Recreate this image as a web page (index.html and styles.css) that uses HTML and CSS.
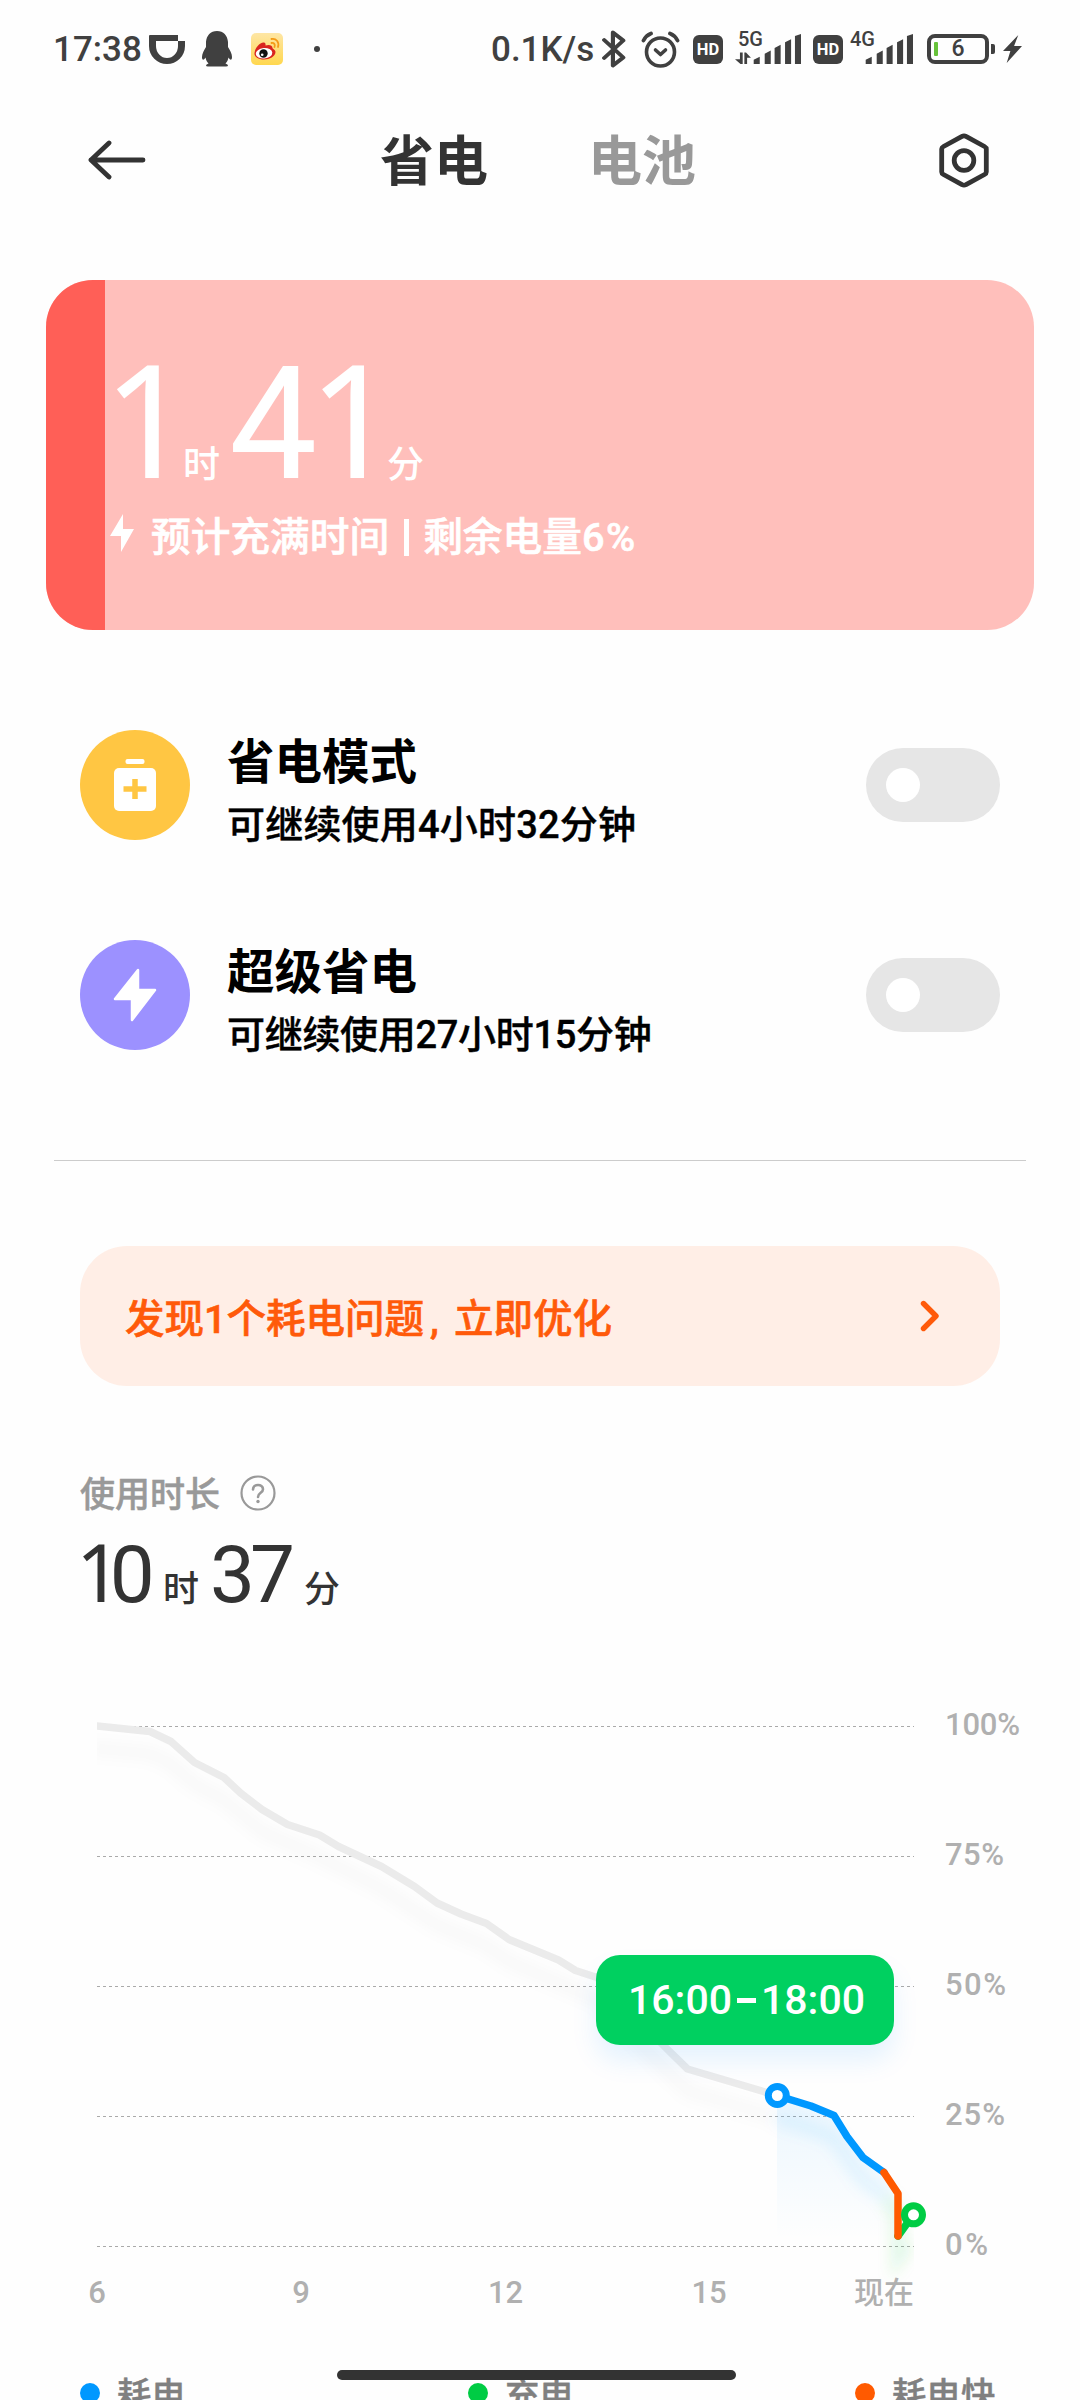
FILE: index.html
```html
<!DOCTYPE html>
<html lang="zh-CN">
<head>
<meta charset="utf-8">
<title>省电</title>
<link rel="stylesheet" href="styles.css">
</head>
<body>
<main class="screen">
  <header class="status">
    <span class="clock">17:38</span>
    <svg class="ic-didi" width="36" height="29" viewBox="0 0 36 29"><path fill="#404040" d="M1 0H29V6H36V11A18 18 0 0 1 0 11V1Q0 0 1 0ZM7 6V11A11 12 0 0 0 29 11V6Z"/></svg>
    <svg class="ic-qq" width="30" height="36" viewBox="0 0 30 36"><path fill="#404040" d="M15 0C21.500 0 25.500 4.500 26 11V16C28 19 30 23 30 26C30 29 28.500 30 26.500 26.500C26 29 25 31 23.500 32.500Q26 33.500 26 34.500Q26 35.500 24 35.500H6Q4 35.500 4 34.500Q4 33.500 6.500 32.500C5 31 4 29 3.500 26.500C1.500 30 0 29 0 26C0 23 2 19 4 16V11C4.500 4.500 8.500 0 15 0Z"/></svg>
    <svg class="ic-weibo" width="32" height="32" viewBox="0 0 32 32"><defs><linearGradient id="wb" x2="0" y2="1"><stop stop-color="#fee6a5"/><stop offset="1" stop-color="#ffd74e"/></linearGradient></defs><rect width="32" height="32" rx="5" fill="url(#wb)"/><path fill="#d9241f" d="M3.500 20C4 15 9 9 13 9.500C15 10 14.500 12 14.500 12.500C17 11.500 21.500 11.500 21.500 15C21.500 16 24.500 16.500 24.500 19C24.500 23.500 18.500 26.500 13 26.500C7.500 26.500 3 24 3.500 20Z"/><ellipse cx="13" cy="20.300" rx="8.300" ry="5.200" fill="#fff" transform="rotate(-5 13 20)"/><circle cx="12.500" cy="20.500" r="4.200" fill="#111"/><circle cx="11.200" cy="21.800" r="1.300" fill="#fff"/><path fill="none" stroke="#f49b17" stroke-width="1.800" stroke-linecap="round" d="M20.500 6C25 5 28.500 9 27 14M20.500 10C23 9.500 24.500 11.500 23.500 14"/></svg>
    <span class="dot"></span>
    <span class="speed">0.1K/s</span>
    <svg class="ic-bt" width="24" height="38" viewBox="0 0 22 38" preserveAspectRatio="none"><path fill="none" stroke="#404040" stroke-width="3.800" stroke-linejoin="round" stroke-linecap="round" d="M2 10L19.500 27.500L10 35.500V2.500L19.500 10.500L2 28"/></svg>
    <svg class="ic-alarm" width="39" height="37" viewBox="0 0 39 37"><g fill="none" stroke="#404040"><circle cx="19.500" cy="21" r="14" stroke-width="3.600"/><path stroke-width="3.800" stroke-linecap="round" d="M2.500 9.500Q5 4.500 10 2.500M36.500 9.500Q34 4.500 29 2.500"/><path stroke-width="3.600" stroke-linecap="round" stroke-linejoin="round" d="M14.500 19L19.500 23.500L24.500 19"/></g></svg>
    <span class="hd hd-one">HD</span>
    <div class="signal signal-one">
      <span class="net">5G</span>
      <svg width="66" height="30" viewBox="0 0 60 29" preserveAspectRatio="none"><g fill="#404040"><path d="M4.500 18H7V29H5L0 24.500H4.500ZM8.500 18H10L14.500 23H11V29H8.500Z"/><path d="M17 25L22.500 22V29H17ZM27 19L32.500 16V29H27ZM36 13.500L41.500 10.500V29H36ZM45.500 8L51 5V29H45.500ZM54.500 2L60 0V29H54.500Z"/></g></svg>
    </div>
    <span class="hd hd-two">HD</span>
    <div class="signal signal-two">
      <span class="net">4G</span>
      <svg width="66" height="30" viewBox="0 0 60 29" preserveAspectRatio="none"><path fill="#404040" d="M17 25L22.500 22V29H17ZM27 19L32.500 16V29H27ZM36 13.500L41.500 10.500V29H36ZM45.500 8L51 5V29H45.500ZM54.500 2L60 0V29H54.500Z"/></svg>
    </div>
    <div class="batt"><span class="batt-level"></span><span class="batt-num">6</span></div>
    <span class="batt-nub"></span>
    <svg class="ic-charge" width="19" height="28" viewBox="0 0 18 28" preserveAspectRatio="none"><path fill="#404040" d="M14.500 0L0 16H7L3.500 28L18 11H10.500Z"/></svg>
  </header>

  <nav class="topbar">
    <svg width="58" height="40" viewBox="0 0 58 40"><path fill="none" stroke="#333" stroke-width="4.800" stroke-linecap="round" stroke-linejoin="round" d="M21 3L3 20L21 37M3 20H55"/></svg>
    <div class="tabs"><span class="tab tab-on">省电</span><span class="tab">电池</span></div>
    <svg width="50" height="55" viewBox="0 0 50 55"><g fill="none" stroke="#333" stroke-width="4.800" stroke-linejoin="round"><path d="M25 2.800Q26 2.800 27 3.400L45.500 13.500Q47.300 14.500 47.300 16V39Q47.300 40.500 45.500 41.500L27 51.600Q25 52.600 23 51.600L4.500 41.500Q2.700 40.500 2.700 39V16Q2.700 14.500 4.500 13.500L23 3.400Q24 2.800 25 2.800Z"/><circle cx="25" cy="27.500" r="9.800"/></g></svg>
  </nav>

  <section class="hero">
    <div class="hero-fill"></div>
    <div class="hero-body">
      <div class="hero-time"><b class="h1 one">1</b><i class="hu">时</i><b class="h2">4<em class="one">1</em></b><i>分</i></div>
      <div class="hero-note">
        <svg width="24" height="38" viewBox="0 0 24 38"><path fill="#fff" d="M13 0L0 22H11V38L24 15H13Z"/></svg>
        <span>预计充满时间<s></s>剩余电量<em>6%</em></span>
      </div>
    </div>
  </section>

  <section class="modes">
    <div class="mode">
      <span class="badge badge-save"><svg width="42" height="52" viewBox="0 0 42 52"><rect x="11.500" y="0" width="19" height="5" rx="2" fill="#fff"/><rect y="9" width="42" height="43" rx="5" fill="#fff"/><path fill="none" stroke="#ffc643" stroke-width="5.500" stroke-linecap="butt" d="M21 20V40M9.500 30H32.500"/></svg></span>
      <div class="mode-text"><h2>省电模式</h2><p class="p-one">可继续使用4小时32分钟</p></div>
      <span class="toggle"></span>
    </div>
    <div class="mode">
      <span class="badge badge-super"><svg width="44" height="54" viewBox="0 0 44 54"><path fill="#fff" stroke="#fff" stroke-width="2.500" stroke-linejoin="round" d="M25 2V22H42L19 52V31H2Z"/></svg></span>
      <div class="mode-text"><h2>超级省电</h2><p class="p-two">可继续使用27小时15分钟</p></div>
      <span class="toggle"></span>
    </div>
  </section>

  <hr class="rule">

  <section class="notice">
    <span>发现1个耗电问题<i>,</i>立即优化</span>
    <svg width="20" height="32" viewBox="0 0 20 32"><path fill="none" stroke="#ff5a0a" stroke-width="5.400" stroke-linecap="round" stroke-linejoin="round" d="M3.500 3.500L16 16L3.500 28.500"/></svg>
  </section>

  <section class="usage">
    <div class="usage-label"><span>使用时长</span><svg width="36" height="36" viewBox="0 0 36 36"><circle cx="18" cy="18" r="16.500" fill="none" stroke="#999" stroke-width="2.200"/><path fill="none" stroke="#999" stroke-width="2.600" stroke-linecap="round" d="M13 14.500C13 8.500 23 8.500 23 14.200C23 18 18 17.500 18 22"/><circle cx="18" cy="26.500" r="1.700" fill="#999"/></svg></div>
    <div class="usage-time"><b class="u1"><em class="one">1</em>0</b><i class="uu">时</i><b class="u2">37</b><i>分</i></div>
  </section>

  <section class="chart">
    <svg width="1080" height="660" viewBox="0 1680 1080 660">
      <defs>
        <filter id="soft" x="-20%" y="-20%" width="140%" height="150%"><feGaussianBlur stdDeviation="7"/></filter>
        <linearGradient id="area" x2="0" y2="1"><stop stop-color="#0098ff" stop-opacity=".075"/><stop offset="1" stop-color="#0098ff" stop-opacity="0"/></linearGradient>
        <clipPath id="plot"><rect x="97" y="1700" width="817" height="620"/></clipPath>
      </defs>
      <path class="grid" d="M97 1726.500H914M97 1856.500H914M97 1986.500H914M97 2116.500H914M97 2246.500H914"/>
      <path fill="url(#area)" d="M777 2095.500L811 2106L834 2115.500L847 2136.500L863 2157.500L884 2172.500L898 2193.500V2240H777Z"/>
      <g clip-path="url(#plot)">
        <g filter="url(#soft)" fill="none" stroke-width="14" transform="translate(0 22)">
          <path stroke="#000" stroke-opacity=".022" d="M90 1726L150 1731.500L171 1741.500L194.500 1762.500L224 1777.500L262 1809.500L319.500 1835L381.500 1866.500L437 1903L486.500 1923.500L509 1939.500L597 1977.500L663 2045L687.500 2069L777 2095.500"/>
          <path stroke="#0098ff" stroke-opacity=".09" d="M777 2095.500L811 2106L834 2115.500L863 2157.500L884 2172.500"/>
          <path stroke="#00c840" stroke-opacity=".11" d="M886 2174L898 2193.500V2236L908 2222"/>
        </g>
        <path class="line past" d="M90 1725.500L97 1726L150 1731.500L171 1741.500L194.500 1762.500L224 1777.500L240.500 1793L262 1809.500L287.500 1824.500L319.500 1835L338.500 1846.500L381.500 1866.500L414.500 1886.500L437 1903L461 1914L486.500 1923.500L509 1939.500L558.500 1960L575.500 1970.500L597 1977.500L663 2045L687.500 2069L777 2095.500"/>
      </g>
      <path class="line drain" d="M777 2095.500L811 2106L834 2115.500L847 2136.500L863 2157.500L884 2172.500"/>
      <path class="line charge" d="M898 2236L913.500 2214.500"/>
      <path class="line fast" d="M884 2172.500L898 2193.500V2236"/>
      <circle class="ring" cx="777.300" cy="2095.500" r="9" stroke="#0098ff"/>
      <circle class="ring" cx="913.500" cy="2214.800" r="9" stroke="#00cc44"/>
      <g class="axis">
        <text x="945" y="1735" textLength="75">100%</text>
        <text x="945" y="1865" textLength="59">75%</text>
        <text x="945" y="1995" textLength="61">50%</text>
        <text x="945" y="2125" textLength="60">25%</text>
        <text x="945" y="2255" textLength="43">0%</text>
        <g text-anchor="middle">
          <text x="97" y="2303">6</text>
          <text x="301" y="2303">9</text>
          <text x="505.500" y="2303">12</text>
          <text x="709" y="2303">15</text>
        </g>
        <text class="now" x="854" y="2303">现在</text>
      </g>
    </svg>
    <div class="tip">16:00<u></u>18:00</div>
  </section>

  <footer class="legend">
    <span class="key key-drain">耗电</span><span class="key key-charge">充电</span><span class="key key-fast">耗电快</span>
  </footer>
  <div class="homebar"></div>
</main>
</body>
</html>
```
FILE: styles.css
```css
* { box-sizing: border-box; }
body { margin: 0; background: #fefefe; }
svg { display: block; flex: none; }
i, em { font-style: normal; }
.screen {
  position: relative;
  width: 1080px;
  height: 2400px;
  overflow: hidden;
  font-family: Roboto, "Noto Sans CJK SC", sans-serif;
  font-weight: 500;
  color: #333;
  white-space: nowrap;
}

.status { display: flex; align-items: center; height: 98px; padding-left: 53px; color: #404040; }
.status > * { flex: none; }
.clock, .speed { font-size: 35px; line-height: 40px; padding-top: 2px; }
.clock { width: 96px; }
.ic-qq { margin-left: 17px; }
.ic-weibo { margin-left: 19px; }
.dot { width: 6px; height: 6px; margin-left: 31px; border-radius: 50%; background: #404040; }
.speed { width: 111px; margin-left: 171px; }
.ic-alarm { margin-left: 15px; }
.hd {
  width: 30px; height: 29px; border-radius: 6px; background: #404040; color: #fff;
  font: 700 16.500px/30px Roboto, sans-serif; text-align: center;
}
.hd-one { margin-left: 13px; }
.hd-two { margin-left: 12px; }
.signal { position: relative; width: 66px; }
.signal-one { margin-left: 12px; }
.signal-two { margin-left: 4px; }
.net { position: absolute; left: 3px; top: -7px; font-size: 20px; line-height: 24px; }
.batt {
  position: relative; display: flex; align-items: center; justify-content: center;
  width: 62px; height: 30px; margin-left: 14px; border: 4px solid #404040; border-radius: 8px;
}
.batt-level { position: absolute; left: 3px; top: 4px; width: 4px; height: 14px; border-radius: 1px; background: #67c23a; }
.batt-num { font-size: 23px; line-height: 22px; }
.batt-nub { width: 4px; height: 10px; margin-left: 2px; border-radius: 0 2px 2px 0; background: #404040; }
.ic-charge { margin-left: 8px; }

.topbar { display: flex; align-items: center; height: 124px; padding: 0 91px 0 88px; }
.tabs { display: flex; gap: 100px; margin: 0 auto 0 234px; padding-top: 5px; }
.tab { font-size: 54px; line-height: 72px; font-weight: 700; color: #999; }
.tab-on { color: #333; }

.hero { display: flex; width: 988px; height: 350px; margin: 58px 46px 0; border-radius: 47px; background: #ffbfbb; overflow: hidden; color: #fff; }
.hero-fill { flex: none; width: 59px; background: #ff5f57; }
.hero-body { padding: 61px 0 0 5px; }
.hero-time { display: flex; align-items: baseline; height: 158px; line-height: 152px; }
.hero-time b { font-size: 157px; font-weight: 400; }
.hero-time i { font-size: 37px; }
.one { font-family: "Noto Sans", sans-serif; }
.h1 { width: 80px; margin-left: -7px; }
.hu { width: 46px; }
.h2 { width: 158px; }
.h2 em { margin-left: -9px; }
.hero-note { display: flex; align-items: center; gap: 17px; height: 60px; margin-top: 4px; font-size: 39.700px; -webkit-text-stroke: .6px; }
.hero-note s { display: inline-block; width: 5px; height: 37px; margin: 0 14px 0 15px; vertical-align: -5px; background: #fff; }
.hero-note em { letter-spacing: 1.500px; }

.modes { display: grid; gap: 100px; padding: 100px 80px 0; }
.mode { display: flex; align-items: center; height: 110px; color: #000; }
.badge { display: grid; place-items: center; width: 110px; height: 110px; border-radius: 50%; }
.badge-save { background: #ffc643; }
.badge-super { background: #9c91ff; }
.mode-text { flex: 1; padding: 16px 0 0 37px; }
.mode h2 { margin: 0; font-size: 47.500px; font-weight: 700; line-height: 64px; }
.mode p { margin: 0; font-size: 38px; line-height: 60px; -webkit-text-stroke: .4px; }
.p-one { letter-spacing: .2px; }
.p-two { letter-spacing: -.3px; }
.toggle { width: 134px; height: 74px; padding: 20px; border-radius: 37px; background: #e6e6e6; }
.toggle::before { content: ""; display: block; width: 34px; height: 34px; border-radius: 50%; background: #fff; }

.rule { height: 1px; margin: 110px 54px 0; border: 0; background: #ccc; }

.notice { display: flex; align-items: center; justify-content: space-between; height: 140px; margin: 85px 80px 0; padding: 0 60px 0 45px; border-radius: 47px; background: #ffeee6; color: #ff5a0a; font-size: 39.500px; -webkit-text-stroke: .6px; }
.notice span { padding-bottom: 2px; }
.notice i { display: inline-block; width: 30px; text-indent: 6px; }

.usage { height: 294px; padding: 82px 80px 0; }
.usage-label { display: flex; align-items: center; gap: 20px; height: 46px; font-size: 35px; color: #999; -webkit-text-stroke: .5px; }
.usage-label svg { margin-top: 3px; }
.usage-time { display: flex; align-items: baseline; margin-top: 10px; line-height: 94px; }
.usage-time b { font-size: 80px; font-weight: 400; }
.usage-time i { font-size: 36px; }
.u1 { width: 87px; margin-left: -4px; }
.u1 em { letter-spacing: -12px; }
.uu { width: 47px; }
.u2 { width: 94px; letter-spacing: -5px; }

.chart { position: relative; height: 660px; }
.grid { fill: none; stroke: #aaa; stroke-width: 1; stroke-dasharray: 3 3; }
.line { fill: none; stroke-width: 7.500; stroke-linejoin: round; stroke-linecap: round; }
.past { stroke: #ebebeb; }
.drain { stroke: #0098ff; }
.fast { stroke: #ff5a00; }
.charge { stroke: #00cc44; }
.ring { fill: #fff; stroke-width: 7; }
.axis { font-size: 31px; fill: #b0b0b0; }
.now { font-size: 30px; }
.tip {
  position: absolute; left: 596px; top: 275px; display: flex; align-items: center; justify-content: center;
  width: 298px; height: 90px; padding-left: 3px; border-radius: 24px; background: #00d060; color: #fff;
  font-size: 41px; box-shadow: 0 16px 26px rgba(0, 140, 255, .1);
}
.tip u { width: 19px; height: 5px; margin: 0 5px; background: #fff; }

.legend { display: grid; grid-template-columns: 388px 387px 1fr; padding: 25px 80px 0; color: #808080; font-size: 34.500px; line-height: 56px; -webkit-text-stroke: .4px; }
.key { display: flex; align-items: center; gap: 17px; padding-top: 2px; }
.key::before { content: ""; width: 20px; height: 20px; margin-top: -4px; border-radius: 50%; }
.key-drain::before { background: #0098ff; }
.key-charge::before { background: #00cc44; }
.key-fast::before { background: #ff5a00; }
.homebar { position: absolute; left: 337px; top: 2370px; width: 399px; height: 10px; border-radius: 5px; background: #333; }
```
